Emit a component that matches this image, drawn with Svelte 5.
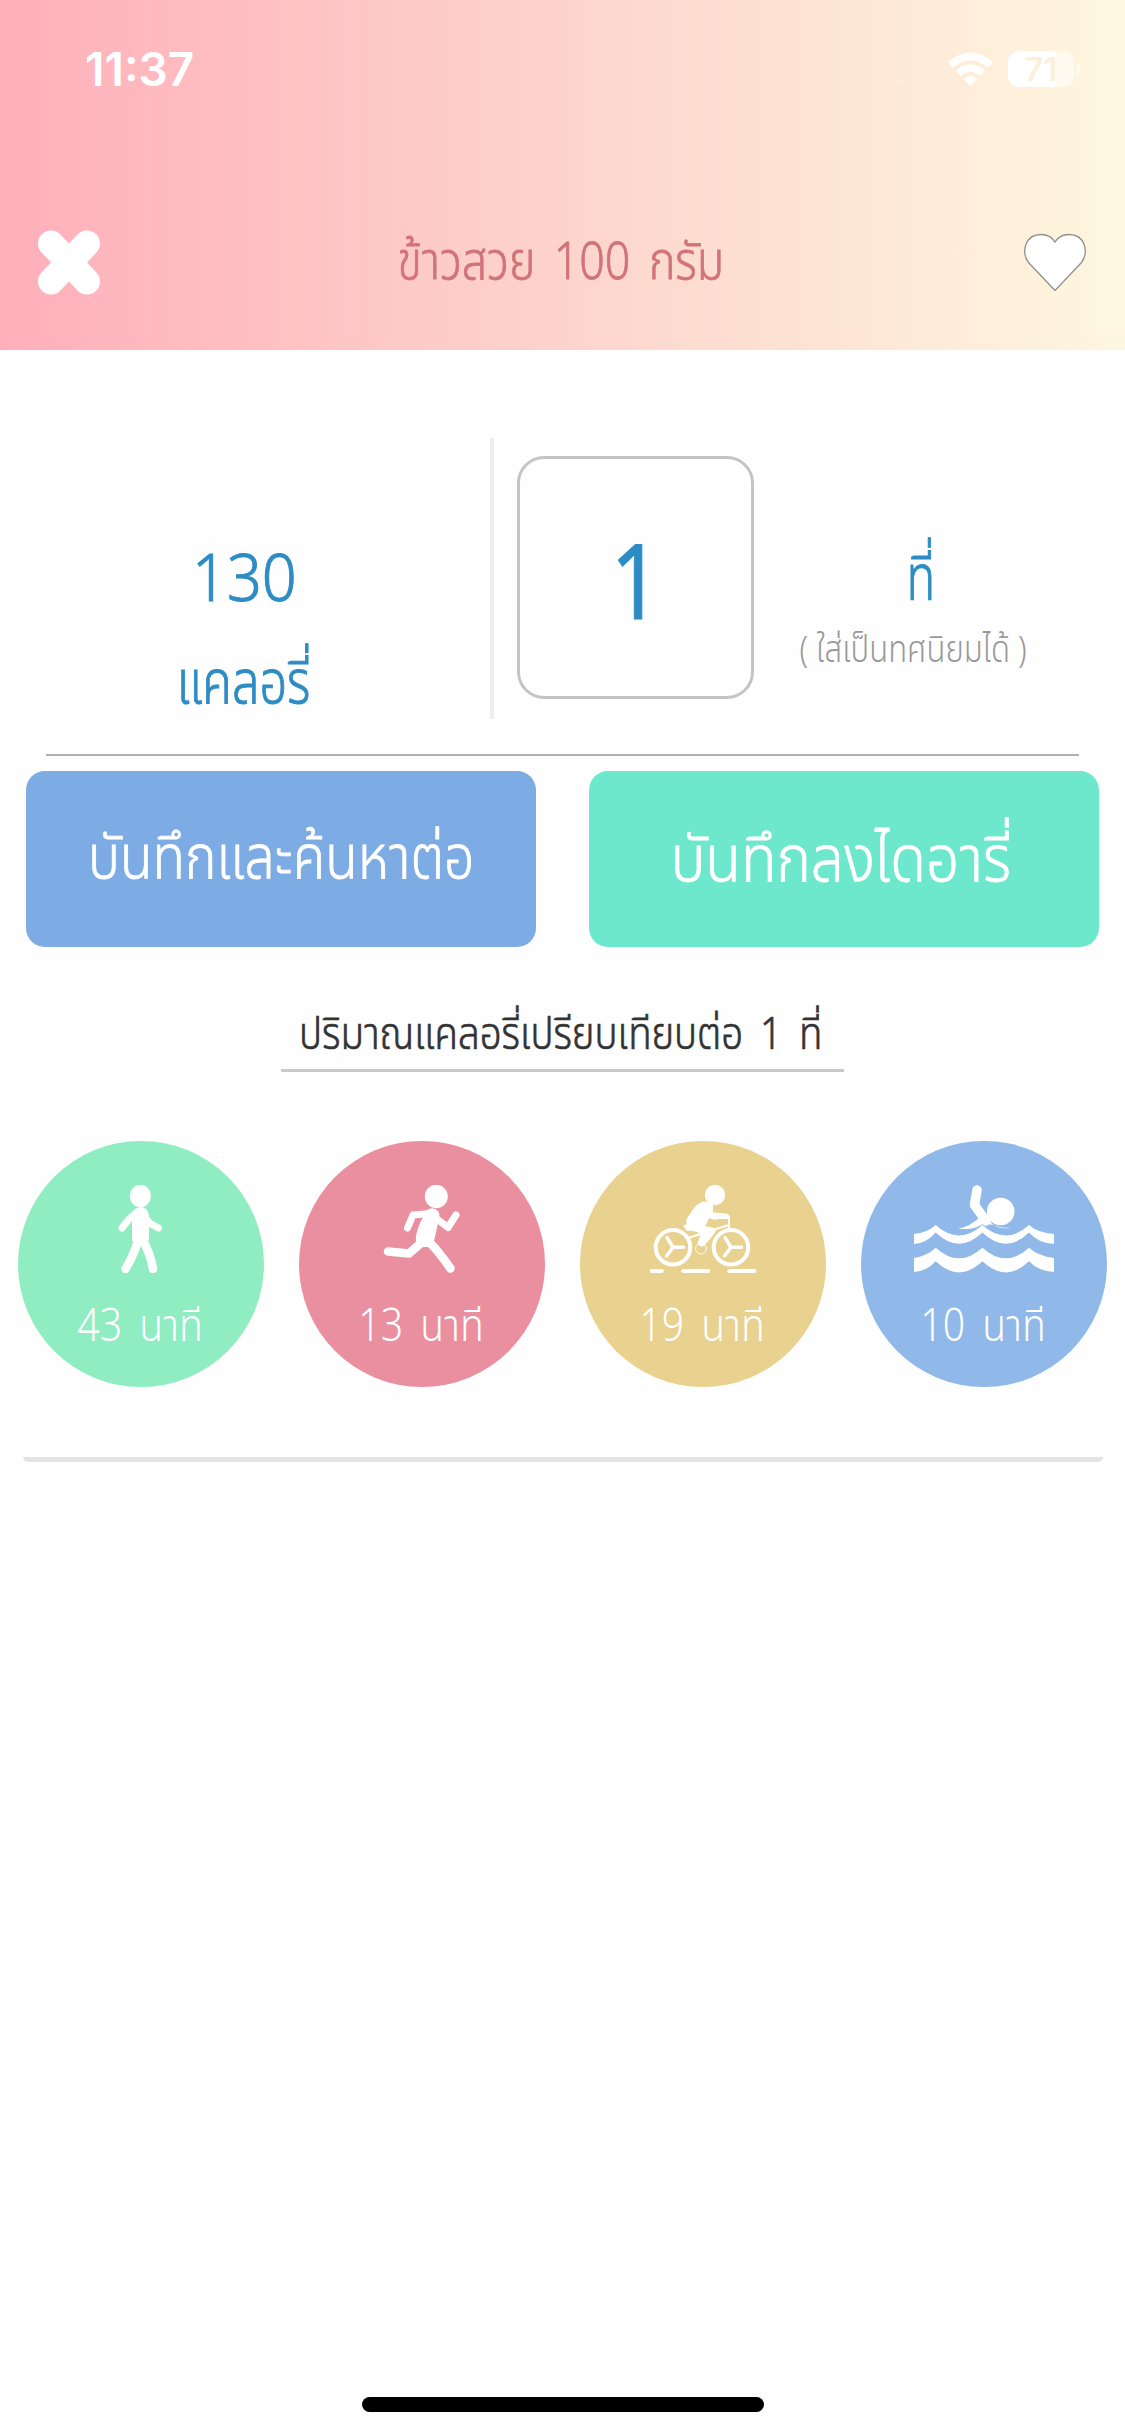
<script lang="ts">
    const food = { name: "ข้าวสวย 100 กรัม", calories: 130, unit: "ที่" };

    let amount = $state("1");

    const activities = [
        { id: "walk", minutes: 43 },
        { id: "run", minutes: 13 },
        { id: "bike", minutes: 19 },
        { id: "swim", minutes: 10 },
    ];
</script>

<main>
    <header>
        <div class="status">
            <span class="time">11:37</span>
            <div class="indicators">
                <svg class="signal" viewBox="0 0 56 10">
                    <circle cx="5" cy="5" r="3" /><circle cx="20" cy="5" r="3" />
                    <circle cx="35" cy="5" r="3" /><circle cx="50" cy="5" r="3" />
                </svg>
                <svg class="wifi" viewBox="0 0 45 34">
                    <path d="M0 10Q22.500-9 45 10L40 15.500Q22.500 1 5 15.500Z" />
                    <path d="M8 18.500Q22.500 6 37 18.500L32 24Q22.500 16 13 24Z" />
                    <path d="M15.500 27Q22.500 21 29.500 27L22.500 34Z" />
                </svg>
                <div class="battery"><span>71</span></div>
            </div>
        </div>
        <nav>
            <svg class="close" viewBox="0 0 62 65">
                <path d="M13 13.500L49 51.500M49 13.500L13 51.500" />
            </svg>
            <h1><span>{food.name}</span></h1>
            <svg class="heart" viewBox="0 0 64 58">
                <path d="M32 57.500L5.500 29.500C-2 19 2 1.500 18 1.500C24 1.500 29 4 32 9C35 4 40 1.500 46 1.500C62 1.500 66 19 58.500 29.500Z" />
            </svg>
        </nav>
    </header>

    <section class="serving">
        <div class="calories">
            <b><span>{food.calories}</span></b>
            <p><span>แคลอรี่</span></p>
        </div>
        <div class="amount"><span>{amount}</span></div>
        <div class="unit">
            <b><span>{food.unit}</span></b>
            <small><span>( ใส่เป็นทศนิยมได้ )</span></small>
        </div>
    </section>

    <div class="actions">
        <button class="more"><span>บันทึกและค้นหาต่อ</span></button>
        <button class="diary"><span>บันทึกลงไดอารี่</span></button>
    </div>

    <h2><span>ปริมาณแคลอรี่เปรียบเทียบต่อ 1 ที่</span></h2>

    <section class="activities">
        {#each activities as activity (activity.id)}
            <div class="activity {activity.id}">
                <svg viewBox="0 0 246 88">
                    {#if activity.id === "walk"}
                        <ellipse cx="122.400" cy="11" rx="10.500" ry="11.200" />
                        <path d="M114 56V36L118 24Q123 20 128 24Q131 27 131 33V53Q131 57 128 57H117Z" />
                        <path class="line" d="M119 27L111 34L104 43M128 34L133 39L140.500 43" />
                        <path class="line leg" d="M121 52C118 65 114 73 107.500 84M124 54C130 64 133 72 135 84" />
                    {:else if activity.id === "run"}
                        <ellipse cx="137.300" cy="11.500" rx="11.500" ry="11.700" />
                        <path d="M128 25Q134 21 139 26Q141 28 140 34L135 56L130 62H123L117 56Q116 50 121 38Z" />
                        <path class="line" d="M131 28.500L114 30L108.500 43M138 34L149 42.500L157 30" />
                        <path class="line leg" d="M129 56Q138 64 151.500 83.500M123 57L110 68.500L89 66.500" />
                    {:else if activity.id === "bike"}
                        <circle cx="135" cy="10" r="10.200" />
                        <path d="M124 16.500Q129 16 133 20V27.500L146 28.500Q150 29 150 34H139Q133 36 129.500 33L125 41L134 43Q137 45 134 49L124 61Q119 63 117.500 58L121 49Q113 45 107 46L103 41L107 39Q104 36 110 29Q117 17 124 16.500Z" />
                        <g class="wheel"><circle cx="93" cy="62.300" r="17.300" /><circle cx="151" cy="62.300" r="17.300" /></g>
                        <path class="spoke" d="M103.500 62.300H93L87 52.500M93 62.300L86.500 71M161.500 62.300H151L145 52.500M151 62.300L144.500 71" />
                        <path class="frame" d="M128 46.500L149 40M149 32V43M108 53L124 48" />
                        <circle class="crank" cx="121" cy="63.500" r="5.500" />
                        <path d="M70 84H82Q86 86 82 88H70ZM103 84H130V88H103Q99 86 103 84M149 84H175Q178 86 175 88H149Q145 86 149 84" />
                    {:else}
                        <circle cx="139.700" cy="26.500" r="13.800" />
                        <path class="line arm" d="M116 5L113.500 20L125 36" />
                        <path d="M119 32Q110 41 97 44H107Q117 43 123 38L132 40L124 30ZM131 39Q138 43 149.500 43Q139 44.500 131 39" />
                        <path d="M53 49Q66 48 74.700 40Q98 61 121.400 40Q145 61 168 40Q177 48 193 49V59Q177 58 168 47.500Q145 70 121.400 47.500Q98 70 74.700 47.500Q66 58 53 59Z" />
                        <path d="M53 73Q66 71 74.700 62.700Q98 84 121.400 62.700Q145 84 168 62.700Q177 71 193 73V87Q177 86 168 76.300Q145 98.500 121.400 76.300Q98 98.500 74.700 76.300Q66 86 53 87Z" />
                    {/if}
                </svg>
                <p><span>{activity.minutes} นาที</span></p>
            </div>
        {/each}
    </section>

    <hr />
    <div class="home"></div>
</main>

<style>
    :global(body) {
        margin: 0;
        background: #fefefe;
    }

    main {
        width: 1125px;
        height: 2436px;
        display: flex;
        flex-direction: column;
        font-family: "Noto Sans Thai", "Noto Sans", sans-serif;
        font-weight: 300;
        overflow: hidden;
    }

    span {
        display: inline-block;
        white-space: nowrap;
    }

    h1, h2, p, b, small {
        margin: 0;
        font-weight: 300;
    }

    header {
        height: 350px;
        background: linear-gradient(90deg, #ffafba, #fdd4cc 50%, #fef7df);
    }

    .status {
        height: 138px;
        box-sizing: border-box;
        padding: 0 43px 0 85px;
        display: flex;
        align-items: center;
        justify-content: space-between;
        color: white;
        font-family: Inter, sans-serif;
    }

    .time {
        font-size: 46px;
        font-weight: 600;
    }

    .indicators {
        display: flex;
        align-items: center;
        fill: white;
    }

    .signal {
        width: 56px;
        margin: 24px 11px 0 0;
        opacity: 0.15;
    }

    .wifi {
        width: 45px;
        margin-right: 15px;
    }

    .battery {
        width: 66px;
        height: 36px;
        margin-right: 8px;
        border-radius: 11px;
        background: linear-gradient(90deg, white 72%, #fffaf0 72%);
        color: #fdefd9;
        font-size: 33px;
        font-weight: 600;
        line-height: 36px;
        text-align: center;
        position: relative;
    }

    .battery::after {
        content: "";
        position: absolute;
        right: -6px;
        top: 12px;
        width: 4px;
        height: 12px;
        border-radius: 0 4px 4px 0;
        background: #fffaf0;
    }

    nav {
        height: 124px;
        padding: 62px 38px 0;
        display: flex;
        align-items: center;
        justify-content: space-between;
    }

    .close {
        width: 62px;
        stroke: white;
        stroke-width: 26;
        stroke-linecap: round;
    }

    .heart {
        width: 64px;
        fill: white;
        stroke: #938f8c;
        stroke-width: 1.3;
    }

    h1 {
        color: #d17378;
        font-size: 52px;
        word-spacing: 8px;
        -webkit-text-stroke: 0.8px;
    }

    /* the condensed look of the labels */
    h1 span { transform: translate(-1px, 1px) scaleX(0.86); }
    .calories b span { transform: translateY(3px) scaleX(0.914); }
    .calories p span { transform: translateY(12px) scaleX(0.81); }
    .amount span { transform: translateY(10px) scaleX(0.85); }
    .unit b span { transform: translate(4px, 10px) scaleX(0.76); }
    .unit small span { transform: translate(-3px, 6px) scaleX(0.84); }
    .more span { transform: scaleX(0.889); }
    .diary span { transform: translate(-3px, 2px) scaleX(0.912); }
    h2 span { transform: translate(-2px, 4px) scaleX(0.873); }
    .activity span { transform: translate(-1px, 4px) scaleX(0.87); }

    .serving {
        margin: 0 46px;
        height: 404px;
        border-bottom: 2px solid #b0b0b0;
        display: flex;
        color: #2d8cc4;
        -webkit-text-stroke: 1px;
    }

    .calories {
        width: 396px;
        height: 281px;
        margin-top: 88px;
        padding-right: 48px;
        border-right: 4px solid #eee;
        display: flex;
        flex-direction: column;
        align-items: center;
    }

    .calories b {
        margin-top: 90px;
        font-size: 67px;
        line-height: 100px;
    }

    .calories p {
        font-size: 60px;
        line-height: 90px;
    }

    .amount {
        width: 231px;
        height: 237px;
        margin: 106px 0 0 23px;
        border: 3px solid #c4c4c4;
        border-radius: 27px;
        display: flex;
        align-items: center;
        justify-content: center;
        font-size: 104px;
        font-weight: 400;
    }

    .unit {
        flex: 1;
        padding-top: 170px;
        display: flex;
        flex-direction: column;
        align-items: center;
    }

    .unit b {
        font-size: 62px;
        line-height: 100px;
    }

    small {
        color: #999;
        font-size: 37px;
        line-height: 50px;
        -webkit-text-stroke: 0;
    }

    .actions {
        display: flex;
        gap: 53px;
        margin: 15px 26px 0;
    }

    button {
        flex: 1;
        height: 176px;
        border: 0;
        border-radius: 19px;
        padding: 0;
        color: white;
        font: inherit;
        font-size: 60px;
        -webkit-text-stroke: 0.8px;
    }

    .more {
        background: #7dabe3;
    }

    .diary {
        background: #6ee8cd;
        font-size: 64px;
    }

    h2 {
        width: 563px;
        height: 122px;
        margin: 0 auto;
        border-bottom: 3px solid #cacaca;
        color: #333;
        font-size: 44px;
        line-height: 170px;
        word-spacing: 8px;
        -webkit-text-stroke: 0.7px;
        display: flex;
        justify-content: center;
    }

    .activities {
        margin: 69px 18px 0;
        display: flex;
        justify-content: space-between;
    }

    .activity {
        width: 246px;
        height: 246px;
        border-radius: 50%;
        color: white;
        fill: white;
        font-size: 45px;
        word-spacing: 8px;
        text-align: center;
    }

    .activity svg {
        display: block;
        margin-top: 44px;
    }

    .activity p {
        line-height: 100px;
    }

    .walk { background: #90edc2; }
    .run { background: #ea8f9f; }
    .bike { background: #e9d18f; }
    .swim { background: #90b9e9; }

    .line, .wheel, .spoke, .frame, .crank {
        fill: none;
        stroke: white;
        stroke-width: 7;
        stroke-linecap: round;
        stroke-linejoin: round;
    }

    .leg { stroke-width: 8.5; }
    .arm { stroke-width: 9.5; }
    .wheel { stroke-width: 4; }
    .spoke { stroke-width: 3.5; }
    .frame { stroke-width: 2; }
    .crank { stroke-width: 1; }

    hr {
        width: 1080px;
        height: 5px;
        margin: 70px auto 0;
        border: 0;
        border-radius: 0 0 8px 8px;
        background: #e4e4e4;
    }

    .home {
        width: 402px;
        height: 15px;
        margin: auto auto 24px;
        border-radius: 8px;
        background: black;
    }
</style>
